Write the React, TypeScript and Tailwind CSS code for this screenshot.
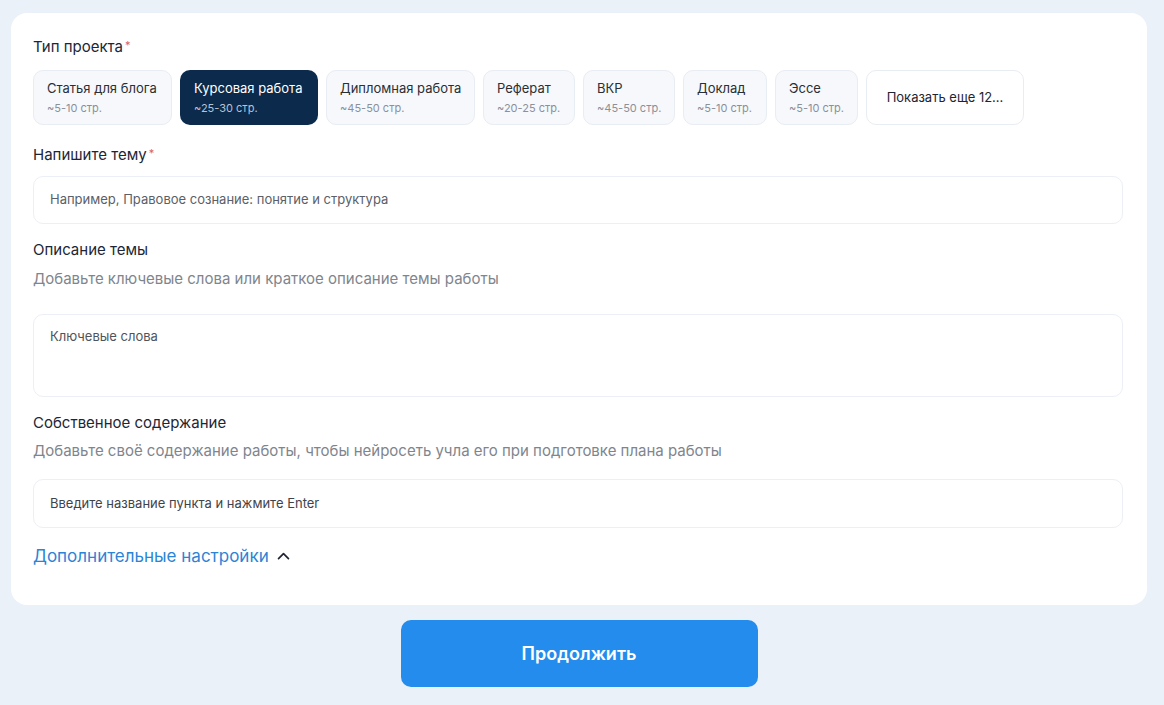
import React from 'react';

const types = [
  { title: 'Статья для блога', pages: '~5-10 стр.', w: 'w-[139px]' },
  { title: 'Курсовая работа', pages: '~25-30 стр.', w: 'w-[138px]', active: true },
  { title: 'Дипломная работа', pages: '~45-50 стр.', w: 'w-[149px]' },
  { title: 'Реферат', pages: '~20-25 стр.', w: 'w-[92px]' },
  { title: 'ВКР', pages: '~45-50 стр.', w: 'w-[92px]' },
  { title: 'Доклад', pages: '~5-10 стр.', w: 'w-[84px]' },
  { title: 'Эссе', pages: '~5-10 стр.', w: 'w-[83px]' },
];

const Label: React.FC<{ text: string; required?: boolean }> = ({ text, required }) => (
  <div className="flex items-start text-[15px] leading-5 text-[#1c2636]">
    {text}
    {required && <span className="ml-[2px] text-[11px] leading-4 text-[#e0605f]">*</span>}
  </div>
);

const App: React.FC = () => {
  return (
    <div className="min-h-[705px] bg-[#ebf1f9] pl-[11px] pr-[17px] pt-[13px] font-['Inter',sans-serif]">
      {/* Form card */}
      <div className="rounded-[16px] bg-white pb-[37px] pl-[22px] pr-[24px] pt-[24px]">
        <Label text="Тип проекта" required />
        <div className="mt-[13px] flex gap-[8px] whitespace-nowrap">
          {types.map((t) =>
            t.active ? (
              <div
                key={t.title}
                className={`${t.w} flex h-[55px] shrink-0 flex-col justify-center rounded-[10px] bg-[#0b2a4c] px-[14px]`}
              >
                <div className="text-[13px] leading-4 text-white">{t.title}</div>
                <div className="mt-[4px] text-[11px] leading-4 text-[#b7c3d3]">{t.pages}</div>
              </div>
            ) : (
              <div
                key={t.title}
                className={`${t.w} flex h-[55px] shrink-0 flex-col justify-center rounded-[10px] border border-[#e8ecf3] bg-[#f6f8fc] px-[13px]`}
              >
                <div className="text-[13px] leading-4 text-[#2a2f36]">{t.title}</div>
                <div className="mt-[4px] text-[11px] leading-4 text-[#8b9099]">{t.pages}</div>
              </div>
            )
          )}
          <div className="flex h-[55px] w-[158px] shrink-0 items-center justify-center rounded-[10px] border border-[#e8ecf3] bg-white text-[13px] text-[#1f2530]">
            Показать еще 12...
          </div>
        </div>

        <div className="mt-[20px]">
          <Label text="Напишите тему" required />
        </div>
        <div className="mt-[11px] flex h-[48px] items-center rounded-[10px] border border-[#eceff5] px-[16px] text-[13px] text-[#5b6068]">
          Например, Правовое сознание: понятие и структура
        </div>

        <div className="mt-[16px]">
          <Label text="Описание темы" />
        </div>
        <div className="mt-[9px] text-[15px] leading-5 text-[#80858d]">
          Добавьте ключевые слова или краткое описание темы работы
        </div>
        <div className="mt-[25px] h-[83px] rounded-[10px] border border-[#eceff5] px-[16px] pt-[13px] text-[13px] leading-4 text-[#4f545c]">
          Ключевые слова
        </div>

        <div className="mt-[16px]">
          <Label text="Собственное содержание" />
        </div>
        <div className="mt-[8px] text-[15px] leading-5 text-[#80858d]">
          Добавьте своё содержание работы, чтобы нейросеть учла его при подготовке плана работы
        </div>
        <div className="mt-[18px] flex h-[49px] items-center rounded-[10px] border border-[#eceff5] px-[16px] text-[13px] text-[#3f444c]">
          Введите название пункта и нажмите Enter
        </div>

        <div className="mt-[16px] flex items-center gap-[6px] text-[17px] leading-6 text-[#2b84d6]">
          Дополнительные настройки
          <svg width="17" height="17" viewBox="0 0 24 24" fill="none" stroke="#1f2530" strokeWidth="2.4" strokeLinecap="round" strokeLinejoin="round">
            <path d="M5 15l7-7 7 7" />
          </svg>
        </div>
      </div>

      <div className="mt-[15px] flex justify-center">
        <button className="h-[67px] w-[357px] rounded-[10px] bg-[#238cec] text-[18px] font-semibold text-white">
          Продолжить
        </button>
      </div>
    </div>
  );
};

export default App;
